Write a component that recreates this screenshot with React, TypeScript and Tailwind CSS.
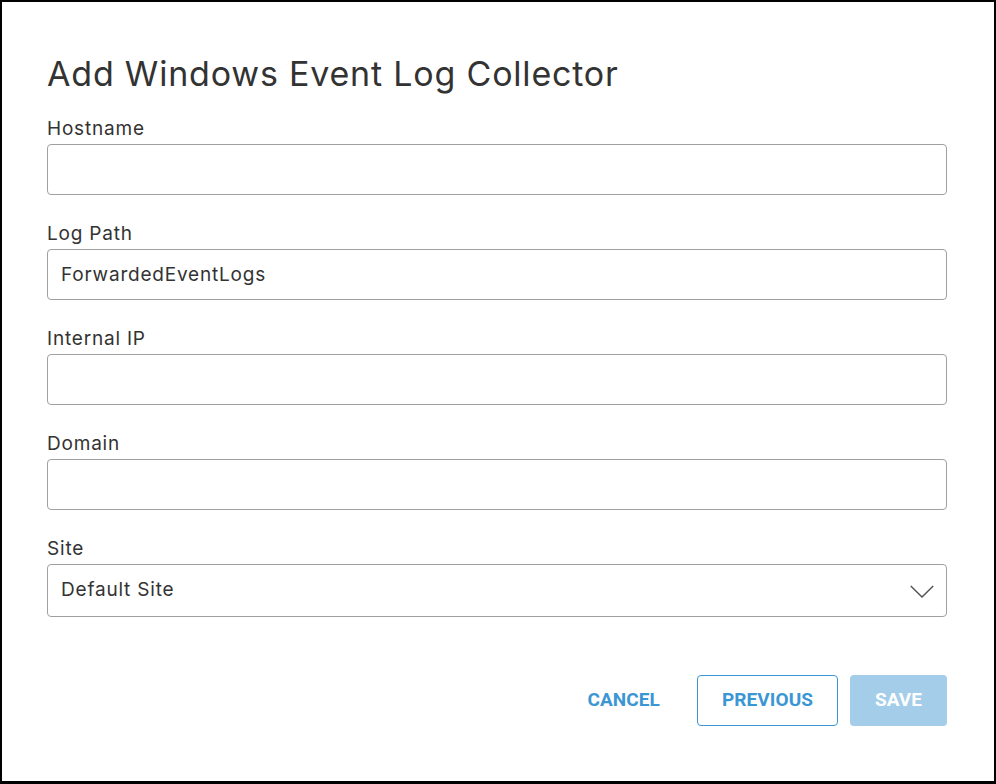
import { ChangeEvent, useState } from "react";

type Field = {
  label: string;
  value: string;
};

const initialFields: Field[] = [
  { label: "Hostname", value: "" },
  { label: "Log Path", value: "ForwardedEventLogs" },
  { label: "Internal IP", value: "" },
  { label: "Domain", value: "" },
];

export default function App() {
  const [fields, setFields] = useState(initialFields);
  const [site, setSite] = useState("Default Site");

  const update = (index: number) => (e: ChangeEvent<HTMLInputElement>) => {
    const next = fields.slice();
    next[index] = { ...next[index], value: e.target.value };
    setFields(next);
  };

  return (
    <div
      className="h-[784px] w-[996px] border-2 border-b-[3px] border-black bg-white text-[#333]"
      style={{ fontFamily: "Inter, 'Liberation Sans', sans-serif" }}
    >
      <div className="pl-[45px] pt-[50px]">
        <h1 className="text-[34px] leading-[44px] tracking-[0.8px]">Add Windows Event Log Collector</h1>

        <div className="mt-[20px] flex flex-col">
          {fields.map((f, i) => (
            <label key={f.label} className="mb-[26px] block">
              <span className="block text-[19px] leading-[26px] tracking-[0.8px]">{f.label}</span>
              <input
                value={f.value}
                onChange={update(i)}
                className="mt-[2px] block h-[51px] w-[900px] rounded-[4px] border border-[#a0a0a0] px-[13px] text-[19px] tracking-[0.8px] text-[#333] outline-none"
              />
            </label>
          ))}

          <label className="block">
            <span className="block text-[19px] leading-[26px] tracking-[0.8px]">Site</span>
            <div className="relative mt-[2px] w-[900px]">
              <select
                value={site}
                onChange={(e) => setSite(e.target.value)}
                className="block h-[53px] w-full appearance-none rounded-[4px] border border-[#a0a0a0] bg-white px-[13px] text-[19px] tracking-[0.8px] text-[#333] outline-none"
              >
                <option>Default Site</option>
              </select>
              <svg
                className="pointer-events-none absolute right-[13px] top-[21px]"
                width="24"
                height="13"
                viewBox="0 0 24 13"
                fill="none"
              >
                <path d="M0.8 1 L12 12 L23.2 1" stroke="#555" strokeWidth="1.5" />
              </svg>
            </div>
          </label>
        </div>

        <div
          className="mt-[58px] flex w-[900px] items-center justify-end"
          style={{ fontFamily: "Roboto, 'Liberation Sans', sans-serif" }}
        >
          <button type="button" className="mr-[37px] text-[19px] font-bold tracking-[0.1px] text-[#3b96d4]">
            CANCEL
          </button>
          <button
            type="button"
            className="mr-[12px] h-[51px] w-[141px] rounded-[4px] border border-[#3b96d4] text-[19px] font-bold tracking-[0.1px] text-[#3b96d4]"
          >
            PREVIOUS
          </button>
          <button
            type="button"
            disabled
            className="h-[51px] w-[97px] rounded-[4px] bg-[#a4cdea] text-[19px] font-bold tracking-[0.1px] text-white"
          >
            SAVE
          </button>
        </div>
      </div>
    </div>
  );
}
